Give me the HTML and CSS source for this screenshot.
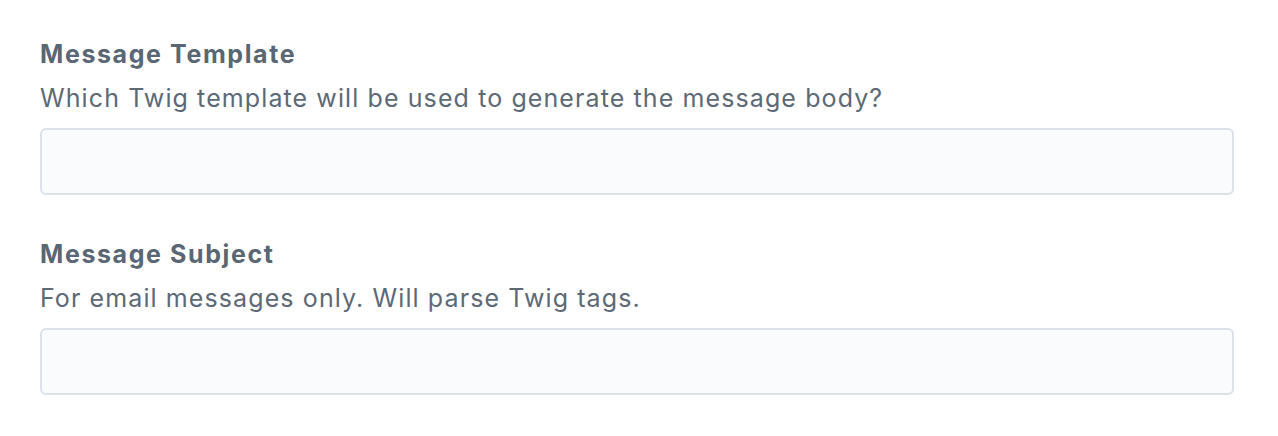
FILE: index.html
```html
<!DOCTYPE html>
<html>
<head>
<meta charset="utf-8">
<link rel="stylesheet" href="styles.css">
</head>
<body>
<div class="form">
  <div class="field">
    <div class="heading">
      <label class="label">Message Template</label>
      <div class="instructions">Which Twig template will be used to generate the message body?</div>
    </div>
    <input class="text" type="text">
  </div>
  <div class="field">
    <div class="heading">
      <label class="label">Message Subject</label>
      <div class="instructions">For email messages only. Will parse Twig tags.</div>
    </div>
    <input class="text" type="text">
  </div>
</div>
</body>
</html>
```

FILE: styles.css
```css
html, body {
  margin: 0;
  padding: 0;
  background: #ffffff;
}
body {
  font-family: Inter, "Noto Sans", "Liberation Sans", sans-serif;
  color: #5a6774;
}
.form {
  display: flex;
  flex-direction: column;
  gap: 41px;
  padding: 36px 44px 0 40px;
}
.field {
  display: flex;
  flex-direction: column;
}
.heading {
  display: flex;
  flex-direction: column;
  gap: 9px;
  margin-bottom: 13px;
}
.label {
  font-size: 25px;
  font-weight: 700;
  line-height: 36px;
  letter-spacing: 1.6px;
  color: #596673;
}
.instructions {
  font-size: 25px;
  line-height: 34px;
  letter-spacing: 1.1px;
  color: #5c6976;
}
.text {
  box-sizing: border-box;
  height: 67px;
  width: 100%;
  border: 2px solid #dbe2ea;
  border-radius: 6px;
  background: #fafbfd;
  margin: 0;
  padding: 0 16px;
  font: inherit;
  outline: none;
}
```
